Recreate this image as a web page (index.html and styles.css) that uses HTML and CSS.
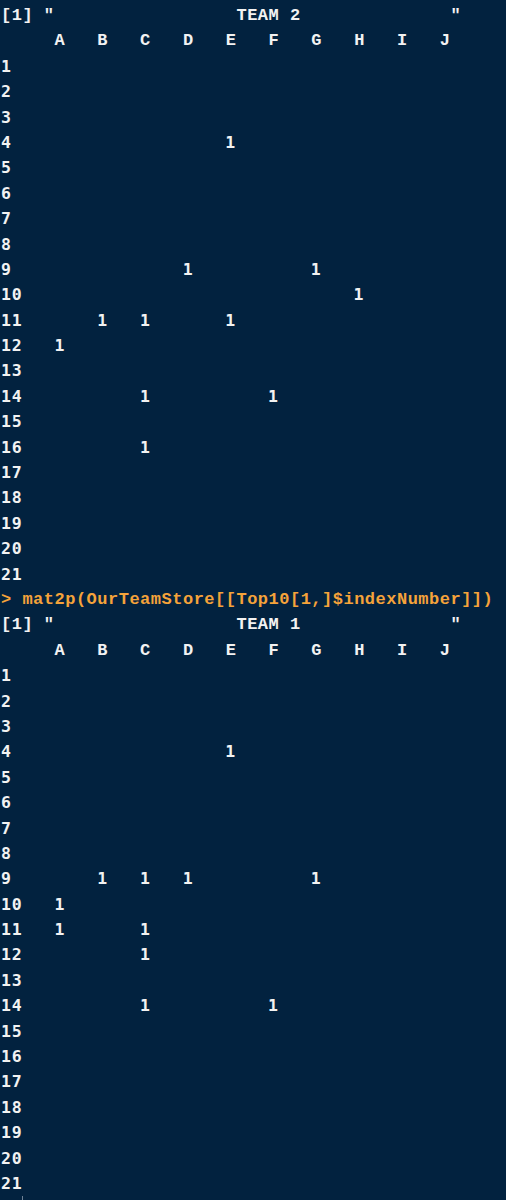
FILE: index.html
```html
<!DOCTYPE html>
<html>
  <head>
    <meta charset="UTF-8">
    <meta name="viewport" content="width=device-width, initial-scale=1.0">
    <title>R Console</title>
    <link rel="stylesheet" href="styles.css">
  </head>
  <body>

    <div class="console">
      <!-- first board -->
      <div class="line">[1] "                 TEAM 2              "</div>
      <div class="line">     A   B   C   D   E   F   G   H   I   J</div>
      <div class="line row">1</div>
      <div class="line row">2</div>
      <div class="line row">3</div>
      <div class="line row">4                    1</div>
      <div class="line row">5</div>
      <div class="line row">6</div>
      <div class="line row">7</div>
      <div class="line row">8</div>
      <div class="line row">9                1           1</div>
      <div class="line row">10                               1</div>
      <div class="line row">11       1   1       1</div>
      <div class="line row">12   1</div>
      <div class="line row">13</div>
      <div class="line row">14           1           1</div>
      <div class="line row">15</div>
      <div class="line row">16           1</div>
      <div class="line row">17</div>
      <div class="line row">18</div>
      <div class="line row">19</div>
      <div class="line row">20</div>
      <div class="line row">21</div>

      <div class="line cmd">&gt; mat2p(OurTeamStore[[Top10[1,]$indexNumber]])</div>

      <!-- second board -->
      <div class="line">[1] "                 TEAM 1              "</div>
      <div class="line">     A   B   C   D   E   F   G   H   I   J</div>
      <div class="line row">1</div>
      <div class="line row">2</div>
      <div class="line row">3</div>
      <div class="line row">4                    1</div>
      <div class="line row">5</div>
      <div class="line row">6</div>
      <div class="line row">7</div>
      <div class="line row">8</div>
      <div class="line row">9        1   1   1           1</div>
      <div class="line row">10   1</div>
      <div class="line row">11   1       1</div>
      <div class="line row">12           1</div>
      <div class="line row">13</div>
      <div class="line row">14           1           1</div>
      <div class="line row">15</div>
      <div class="line row">16</div>
      <div class="line row">17</div>
      <div class="line row">18</div>
      <div class="line row">19</div>
      <div class="line row">20</div>
      <div class="line row">21</div>
      <div class="line"><span class="cursor"></span></div>
    </div>

  </body>
</html>
```

FILE: styles.css
```css
html, body {
  margin: 0;
  padding: 0;
  background-color: #02223f;
}

.console {
  padding: 3px 0 0 1px;
  min-height: 1200px;
  color: #f2f2f2;
  font-family: "Liberation Mono", "Courier New", monospace;
  font-weight: bold;
  font-size: 17px;
  letter-spacing: 0.5px;
}

.line {
  white-space: pre;
  height: 25.4px;
  line-height: 25.4px;
}

.row {
  font-family: "DejaVu Sans Mono", monospace;
  font-size: 16.5px;
  letter-spacing: 0.75px;
}

.cmd {
  color: #f5a33a;
}

.cursor {
  display: inline-block;
  width: 1px;
  height: 6px;
  margin-left: 21px;
  background-color: #6f8296;
  vertical-align: top;
}
```
